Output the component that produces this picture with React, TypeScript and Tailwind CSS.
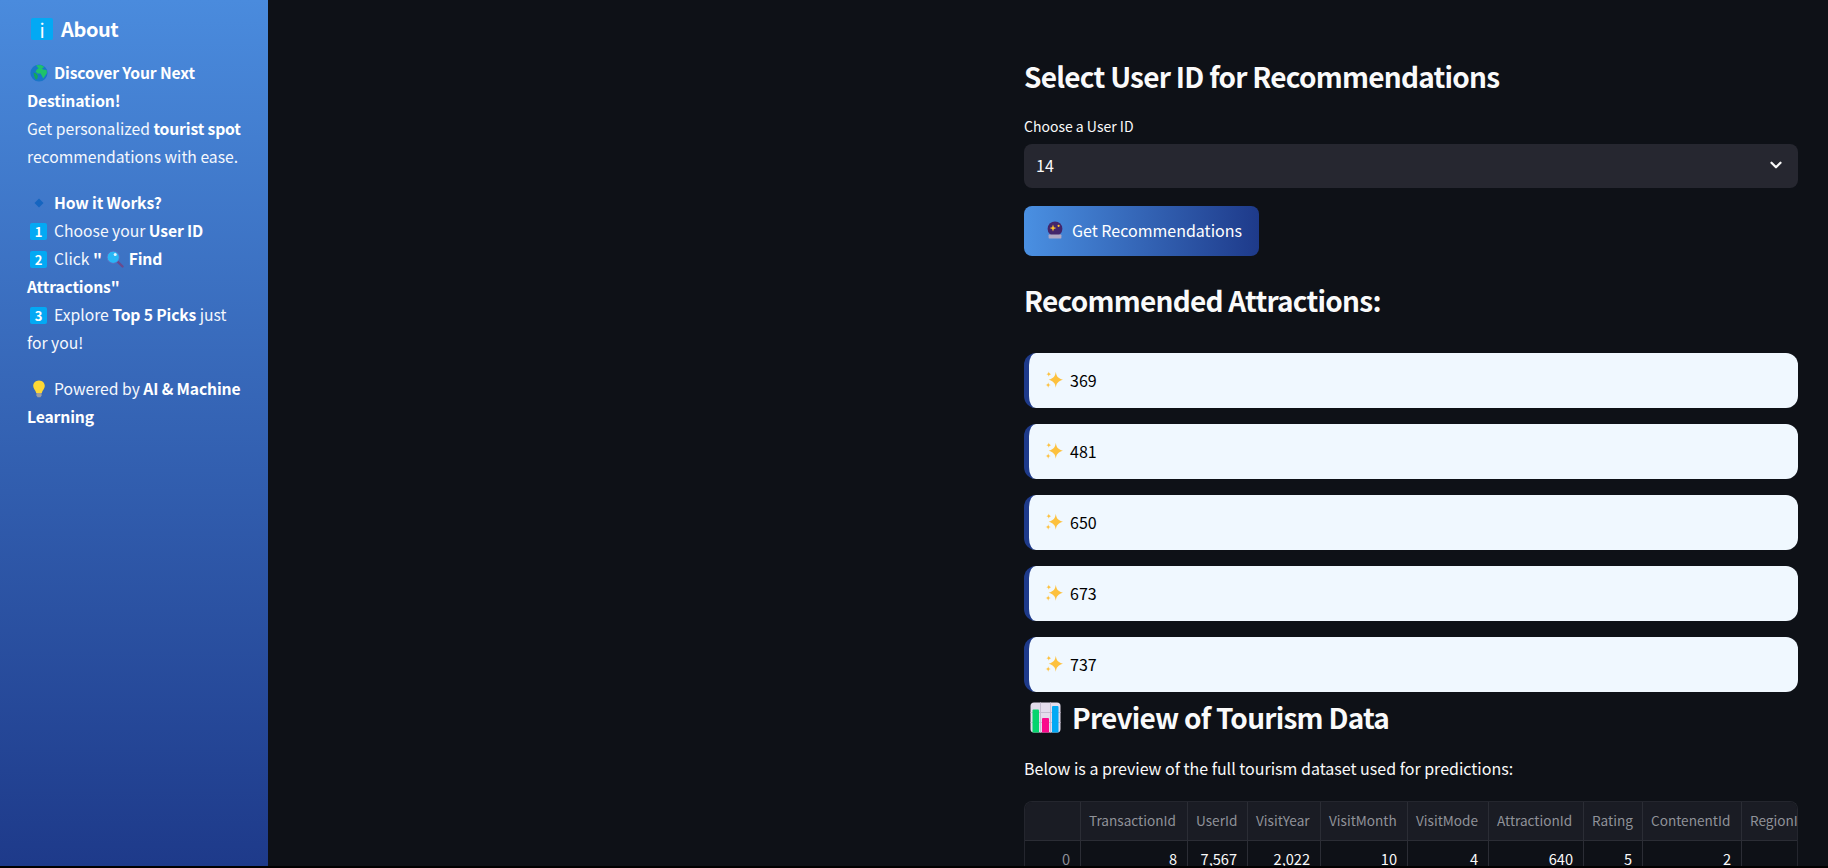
import { ChevronDown } from 'lucide-react'

const FONT = 'font-["Noto_Sans_CJK_SC","Noto_Sans",sans-serif]'

function KeyCap({ label, size = 'small' }: { label: string; size?: 'small' | 'large' }) {
  if (size === 'large') {
    return (
      <span className="inline-flex h-[22px] w-[22px] items-center justify-center rounded-[2px] bg-[#03a9f4] text-[19px] font-normal leading-none text-white">
        {label}
      </span>
    )
  }
  return (
    <span className="ml-[3px] mr-[7px] inline-flex h-[17px] w-[17px] items-center justify-center rounded-[2px] bg-[#03a9f4] text-[13px] font-bold leading-none text-white">
      {label}
    </span>
  )
}

function EmojiBox({ children }: { children: React.ReactNode }) {
  return <span className="ml-[3px] mr-[7px] inline-block h-[18px] w-[17px] translate-y-[3px]">{children}</span>
}

function Globe() {
  return (
    <svg viewBox="0 0 18 18" className="h-[18px] w-[18px]">
      <circle cx="9" cy="9" r="8.6" fill="#1976c8" />
      <path d="M6 1.2 L11 1 L14.5 3 L12 4.2 L13 5.5 L16.6 6 L17 9 L15 12 L13.2 14.6 L12 12 L10.6 9.6 L7.4 9.4 L5.6 7.4 L7 5.2 L8.6 4.4 Z" fill="#1ec26a" />
      <path d="M3.5 8.6 L6.5 9.8 L8 12 L7 15.6 L5.4 15 L4 11.6 Z" fill="#12a85a" />
    </svg>
  )
}

function Diamond() {
  return (
    <svg viewBox="0 0 18 18" className="h-[18px] w-[18px]">
      <polygon points="9,4.5 13.5,9 9,13.5 4.5,9" fill="#1565c0" />
    </svg>
  )
}

function Magnifier() {
  return (
    <svg viewBox="0 0 18 18" className="h-[18px] w-[18px]">
      <path d="M10.5 10.5 L16.5 16.5" stroke="#6a4a8c" strokeWidth="2.4" strokeLinecap="round" />
      <circle cx="7.2" cy="7.2" r="6.2" fill="#29b6f6" stroke="#5c6bc0" strokeWidth="1" />
      <circle cx="9.2" cy="4.4" r="1.5" fill="#e3f6fd" />
    </svg>
  )
}

function Bulb() {
  return (
    <svg viewBox="0 0 18 18" className="h-[18px] w-[18px]">
      <path d="M9 0.6 C5.2 0.6 3.2 3.4 3.2 6 C3.2 8.8 5.6 10 6.2 13 L11.8 13 C12.4 10 14.8 8.8 14.8 6 C14.8 3.4 12.8 0.6 9 0.6 Z" fill="#fdd835" />
      <path d="M6.4 13 H11.6 V15.6 L10.4 17.2 H7.6 L6.4 15.6 Z" fill="#9e9e9e" />
    </svg>
  )
}

function CrystalBall() {
  return (
    <svg viewBox="0 0 18 18" className="h-[18px] w-[18px]">
      <circle cx="9" cy="7.8" r="7.4" fill="#43256b" />
      <path d="M7 3.6 L7.9 6.2 L10.4 7.1 L7.9 8 L7 10.6 L6.1 8 L3.6 7.1 L6.1 6.2 Z" fill="#fbc02d" />
      <circle cx="12.6" cy="4.8" r="1.1" fill="#fbc02d" />
      <rect x="2.6" y="13.6" width="12.8" height="3.8" rx="0.6" fill="#b0a8c4" />
    </svg>
  )
}

function Sparkles() {
  return (
    <svg viewBox="0 0 18 18" className="h-[18px] w-[18px]">
      <path d="M10.8 0.8 C11.4 5.4 13 7.2 18 8.8 C13 10.4 11.4 12.2 10.8 16.8 C10.2 12.2 8.6 10.4 3.6 8.8 C8.6 7.2 10.2 5.4 10.8 0.8 Z" fill="#fdc13e" />
      <path d="M3.8 0.6 C4 2.2 4.6 2.8 6.2 3.2 C4.6 3.6 4 4.2 3.8 5.8 C3.6 4.2 3 3.6 1.4 3.2 C3 2.8 3.6 2.2 3.8 0.6 Z" fill="#fdc13e" />
      <path d="M3.2 11.2 C3.5 13 4 13.6 6 14 C4 14.4 3.5 15 3.2 16.8 C2.9 15 2.4 14.4 0.4 14 C2.4 13.6 2.9 13 3.2 11.2 Z" fill="#fdc13e" />
    </svg>
  )
}

function BarChart() {
  return (
    <svg viewBox="0 0 31 31" className="h-[31px] w-[31px]">
      <rect x="0.5" y="0.5" width="30" height="30" rx="3.5" fill="#e3dcec" />
      <path d="M0.5 10.5 H30.5 M0.5 20.5 H30.5 M10.5 0.5 V30.5 M20.5 0.5 V30.5" stroke="#c4bcd0" strokeWidth="1" />
      <path d="M2.5 8.5 Q2.5 7.5 3.5 7.5 H8 Q9 7.5 9 8.5 V30.5 H2.5 Z" fill="#06d46e" />
      <path d="M12 17 Q12 16 13 16 H18 Q19 16 19 17 V30.5 H12 Z" fill="#fb0a8c" />
      <path d="M22 5 Q22 4 23 4 H27.5 Q28.5 4 28.5 5 V30.5 H22 Z" fill="#03a9f4" />
    </svg>
  )
}

const ATTRACTIONS = ['369', '481', '650', '673', '737']

const COLUMNS = [
  { label: '', value: '0', index: true },
  { label: 'TransactionId', value: '8' },
  { label: 'UserId', value: '7,567' },
  { label: 'VisitYear', value: '2,022' },
  { label: 'VisitMonth', value: '10' },
  { label: 'VisitMode', value: '4' },
  { label: 'AttractionId', value: '640' },
  { label: 'Rating', value: '5' },
  { label: 'ContenentId', value: '2' },
  { label: 'RegionId', value: '' },
]

function Sidebar() {
  return (
    <aside className="h-full w-[268px] shrink-0 bg-linear-to-b/srgb from-[#4a8bdd] to-[#1e3a8a] pl-[27px] pr-[24px] pt-[15px] text-[15.7px] leading-[28px] text-[#f5f8fd]">
      <h2 className="flex h-[28px] items-center gap-[8px] pl-[4px] text-[20px] font-semibold leading-[28px] tracking-[-0.4px] text-white">
        <KeyCap label="i" size="large" />
        About
      </h2>
      <p className="mt-[16px]">
        <EmojiBox><Globe /></EmojiBox>
        <strong className="font-semibold tracking-[-0.15px] text-white">Discover Your Next Destination!</strong>
        <br />
        Get personalized <strong className="font-semibold tracking-[-0.15px] text-white">tourist spot</strong> recommendations with ease.
      </p>
      <p className="mt-[18px]">
        <EmojiBox><Diamond /></EmojiBox>
        <strong className="font-semibold tracking-[-0.15px] text-white">How it Works?</strong>
        <br />
        <KeyCap label="1" />
        Choose your <strong className="font-semibold tracking-[-0.15px] text-white">User ID</strong>
        <br />
        <KeyCap label="2" />
        Click <strong className="font-semibold tracking-[-0.15px] text-white">" <span className="mx-[1px] inline-block h-[18px] w-[18px] translate-y-[3px]"><Magnifier /></span> Find Attractions"</strong>
        <br />
        <KeyCap label="3" />
        Explore <strong className="font-semibold tracking-[-0.15px] text-white">Top 5 Picks</strong> just for you!
      </p>
      <p className="mt-[18px]">
        <EmojiBox><Bulb /></EmojiBox>
        Powered by <strong className="font-semibold tracking-[-0.15px] text-white">AI &amp; Machine Learning</strong>
      </p>
    </aside>
  )
}

function PreviewTable() {
  return (
    <div className="mt-[21px] grid grid-cols-[55px_107px_60px_73px_87px_81px_95px_59px_99px_56px] overflow-hidden rounded-t-[8px] border-l border-r border-t border-[#24262e]">
      {COLUMNS.map((col, i) => (
        <div
          key={`h-${i}`}
          className={`flex h-[39px] items-center overflow-hidden whitespace-nowrap border-b border-[#2b2d35] bg-[#1a1c24] pb-[1px] pl-[8px] text-[13.6px] text-[#909299] ${i > 0 ? 'border-l' : ''}`}
        >
          {col.label}
        </div>
      ))}
      {COLUMNS.map((col, i) => (
        <div
          key={`v-${i}`}
          className={`flex h-[35px] justify-end overflow-hidden whitespace-nowrap border-[#2b2d35] pr-[10px] pt-[7px] text-[14.6px] ${i > 0 ? 'border-l' : ''} ${col.index ? 'text-[#8d8f96]' : 'text-[#fafafa]'}`}
        >
          {col.value}
        </div>
      ))}
    </div>
  )
}

export default function App() {
  return (
    <div className={`h-[868px] w-[1828px] overflow-hidden bg-black ${FONT}`}>
      <div className="flex h-[866px] overflow-hidden bg-[#0e1117] text-[#fafafa]">
        <Sidebar />
        <main className="ml-[756px] w-[774px] pt-[56px]">
          <h2 className="text-[28px] font-semibold leading-[40px] tracking-[-0.75px] text-[#fafafa]">Select User ID for Recommendations</h2>
          <label className="mt-[20px] block text-[14px] leading-[20px]">Choose a User ID</label>
          <div className="mt-[8px] flex h-[44px] items-center justify-between rounded-[8px] bg-[#262730] pb-[2px] pl-[12px] pr-[13px] text-[16px]">
            14
            <ChevronDown className="h-[18px] w-[18px]" strokeWidth={3} />
          </div>
          <button className="mt-[18px] flex h-[50px] w-[235px] items-center justify-center gap-[8px] rounded-[8px] bg-linear-to-r/srgb from-[#4a90e2] to-[#1e3a8a] pb-[2px] pl-[5px] text-[16px] text-white">
            <CrystalBall />
            Get Recommendations
          </button>
          <h2 className="mt-[24px] text-[28px] font-semibold leading-[40px] tracking-[-0.75px] text-[#fafafa]">Recommended Attractions:</h2>
          <div className="mt-[33px] flex flex-col gap-[16px]">
            {ATTRACTIONS.map((id) => (
              <div
                key={id}
                className="flex h-[55px] items-center gap-[7px] rounded-[12px] border-l-[5px] border-[#1e3a8a] bg-[#f0f8ff] pb-[2px] pl-[16px] text-[16px] text-black"
              >
                <Sparkles />
                {id}
              </div>
            ))}
          </div>
          <h2 className="mt-[5px] flex h-[40px] items-center gap-[11px] pl-[6px] text-[28px] font-semibold leading-[40px] tracking-[-0.75px] text-[#fafafa]">
            <BarChart />
            Preview of Tourism Data
          </h2>
          <p className="mt-[19px] text-[16px] leading-[24px]">Below is a preview of the full tourism dataset used for predictions:</p>
          <PreviewTable />
        </main>
      </div>
    </div>
  )
}
